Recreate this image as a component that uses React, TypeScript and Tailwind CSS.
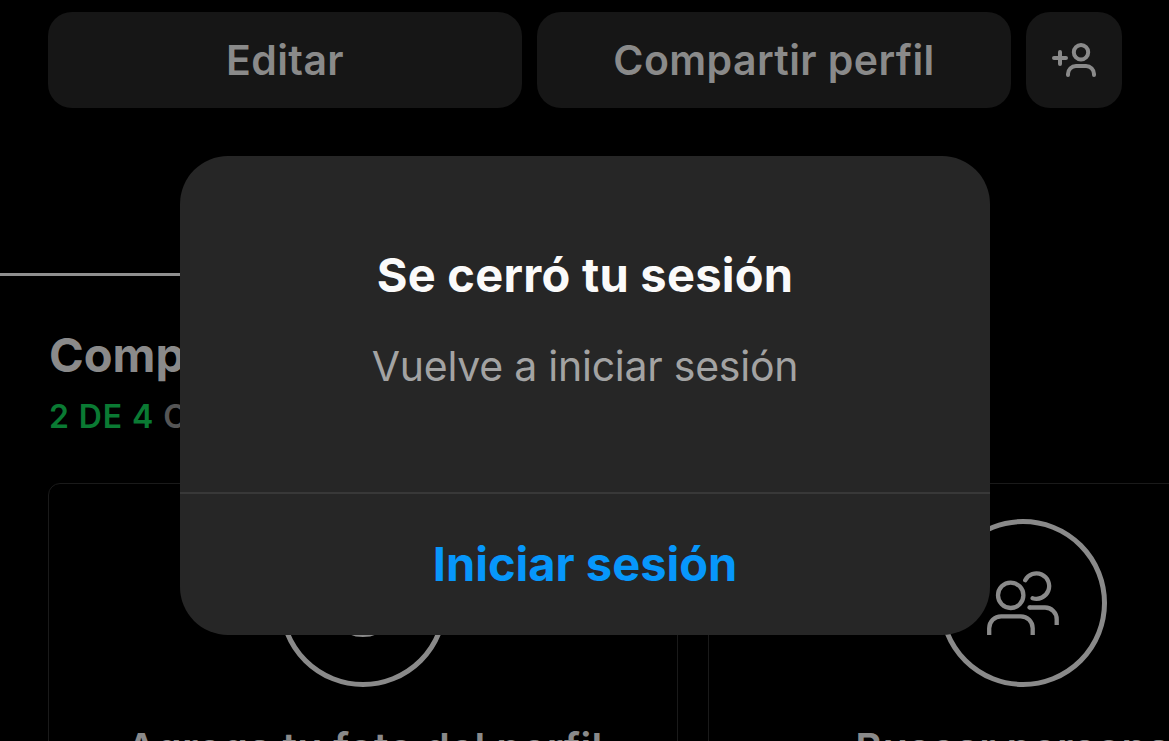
import type { ReactNode } from "react";

function AddUserIcon() {
  return (
    <svg
      width="48"
      height="38"
      viewBox="0 0 48 38"
      fill="none"
      stroke="currentColor"
      strokeWidth="4"
      strokeLinecap="round"
    >
      <path d="M10 11v12M4 17h12" />
      <circle cx="31" cy="11.3" r="7.2" />
      <path d="M18 34v-1a8 8 0 0 1 8-8h10a8 8 0 0 1 8 8v1" />
    </svg>
  );
}

function PhotoIcon() {
  return (
    <svg width="72" height="72" viewBox="0 0 72 72" fill="none" stroke="currentColor" strokeWidth="4">
      <circle cx="36" cy="34" r="34" />
    </svg>
  );
}

function UsersIcon() {
  return (
    <svg width="72" height="64" viewBox="0 0 72 64" fill="none" stroke="currentColor" strokeWidth="4.3">
      <circle cx="23.7" cy="24.3" r="12.7" />
      <path d="M2.2 64v-6.7a12 12 0 0 1 12-12h19.5a12 12 0 0 1 12 12V64" />
      <path d="M38.2 9.2a12.7 12.7 0 1 1 7.4 18" strokeLinecap="round" />
      <path d="M42.5 36.5H58a11.7 11.7 0 0 1 11.7 11.7V54" />
      <circle cx="42.5" cy="36.5" r="2.15" fill="currentColor" stroke="none" />
    </svg>
  );
}

function TaskCard({ icon, title }: { icon: ReactNode; title: string }) {
  return (
    <div className="flex h-[420px] w-[630px] shrink-0 flex-col items-center rounded-[12px] border border-[#1a1a1a] pt-[35px]">
      <div className="flex size-[168px] items-center justify-center rounded-full border-5 border-[#8a8a8a]">
        {icon}
      </div>
      <p className="mt-9 pl-[3px] text-[41px] leading-[50px] font-semibold tracking-[0.3px] whitespace-nowrap">
        {title}
      </p>
    </div>
  );
}

function Profile() {
  return (
    <div className="text-[#8a8a8a]">
      {/* acciones del perfil */}
      <div className="flex px-12 pt-3 text-[41px] font-semibold">
        <button className="mr-[15px] h-24 w-[474px] shrink-0 rounded-3xl bg-[#161616] pt-0.5 tracking-[0.4px]">
          Editar
        </button>
        <button className="mr-[15px] h-24 w-[474px] shrink-0 rounded-3xl bg-[#161616] pt-0.5 tracking-[0.4px]">
          Compartir perfil
        </button>
        <button className="flex size-24 shrink-0 items-center justify-center rounded-3xl bg-[#161616]">
          <AddUserIcon />
        </button>
      </div>

      {/* pestaña activa */}
      <div className="mt-[165px] h-[3px] w-1/2 bg-[#8f8f8f]" />

      <div className="pt-[49px] pl-[49px]">
        <h2 className="text-[47px] leading-[60px] font-bold whitespace-nowrap">Completa tu perfil</h2>
        <p className="mt-3 text-[32px] leading-10 font-semibold tracking-[0.9px] whitespace-nowrap text-[#555555]">
          <span className="text-[#0a7a33]">2 DE 4</span> COMPLETADOS
        </p>
      </div>

      <div className="flex gap-[30px] pt-[46px] pl-12">
        <TaskCard icon={<PhotoIcon />} title="Agrega tu foto del perfil" />
        <TaskCard icon={<UsersIcon />} title="Buscar personas" />
      </div>
    </div>
  );
}

function SessionDialog() {
  return (
    <div className="absolute inset-0 pt-[156px] pl-[180px]">
      <div
        role="dialog"
        className="flex h-[479px] w-[810px] flex-col overflow-hidden rounded-[48px] bg-[#262626] text-center"
      >
        <div className="h-[338px] border-b-2 border-[#383838] pt-[89px]">
          <h1 className="text-[47px] leading-[60px] font-bold tracking-[0.25px] text-[#fafafa]">
            Se cerró tu sesión
          </h1>
          <p className="mt-9 text-[41px] leading-[50px] tracking-[-0.25px] text-[#a3a3a3]">
            Vuelve a iniciar sesión
          </p>
        </div>
        <button className="flex-1 pb-0.5 text-[47px] leading-[60px] font-bold text-[#0797fb]">
          Iniciar sesión
        </button>
      </div>
    </div>
  );
}

export default function App() {
  return (
    <div className="relative h-[741px] w-[1169px] overflow-hidden bg-black font-['Inter','Liberation_Sans',sans-serif]">
      <Profile />
      <SessionDialog />
    </div>
  );
}
